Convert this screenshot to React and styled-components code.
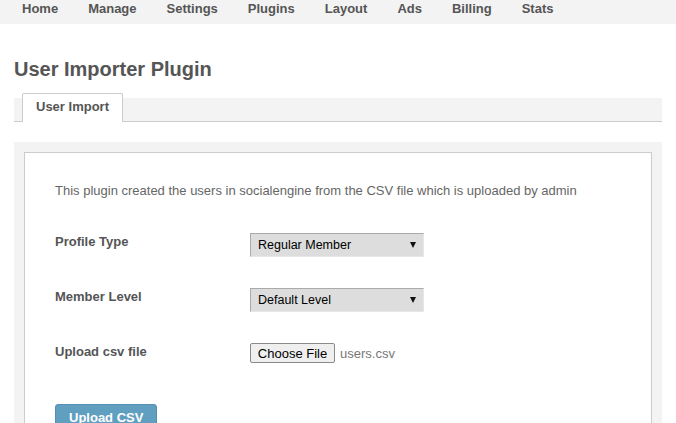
import React, { useState } from 'react';
import styled, { createGlobalStyle } from 'styled-components';

const GlobalStyle = createGlobalStyle`
  body {
    margin: 0;
    background: #fff;
    font-family: "Liberation Sans", Arial, sans-serif;
    font-size: 13px;
    color: #555;
  }
`;

const menu = ['Home', 'Manage', 'Settings', 'Plugins', 'Layout', 'Ads', 'Billing', 'Stats'];

const App = () => {
  const [profile, setProfile] = useState('regular');
  const [level, setLevel] = useState('default');

  return (
    <>
      <GlobalStyle />
      <Nav>
        {menu.map(item => (
          <NavItem key={item} href="#">{item}</NavItem>
        ))}
      </Nav>

      <Title>User Importer Plugin</Title>

      <TabBar>
        <Tab>User Import</Tab>
      </TabBar>

      <Panel>
        <FormBox>
          <Description>
            This plugin created the users in socialengine from the CSV file which is uploaded by admin
          </Description>

          <Row>
            <Label>Profile Type</Label>
            <SelectWrap>
              <Select value={profile} onChange={e => setProfile(e.target.value)}>
                <option value="regular">Regular Member</option>
              </Select>
              <Arrow />
            </SelectWrap>
          </Row>

          <Row>
            <Label>Member Level</Label>
            <SelectWrap>
              <Select value={level} onChange={e => setLevel(e.target.value)}>
                <option value="default">Default Level</option>
              </Select>
              <Arrow />
            </SelectWrap>
          </Row>

          <Row>
            <Label>Upload csv file</Label>
            <FileField>
              <ChooseButton type="button">Choose File</ChooseButton>
              <FileName>users.csv</FileName>
            </FileField>
          </Row>

          <SubmitButton type="button">Upload CSV</SubmitButton>
        </FormBox>
      </Panel>
    </>
  );
};

export default App;

const Nav = styled.nav`
  display: flex;
  height: 24px;
  box-sizing: border-box;
  padding: 1px 0 0 7px;
  background: #f3f3f3;
`;

const NavItem = styled.a`
  padding: 0 15px;
  line-height: 16px;
  font-size: 13px;
  font-weight: bold;
  color: #555;
  text-decoration: none;
`;

const Title = styled.h1`
  margin: 34px 14px 0;
  font-size: 20px;
  line-height: 23px;
  font-weight: bold;
  color: #555;
`;

const TabBar = styled.div`
  display: flex;
  align-items: flex-end;
  height: 23px;
  margin: 17px 14px 0;
  padding-left: 8px;
  background: #f3f3f3;
  border-bottom: 1px solid #ccc;
`;

const Tab = styled.div`
  box-sizing: border-box;
  height: 29px;
  margin-bottom: -1px;
  padding: 4px 13px 6px;
  line-height: 18px;
  font-weight: bold;
  color: #555;
  background: #fff;
  border: 1px solid #ccc;
  border-bottom: none;
  border-radius: 2px 2px 0 0;
`;

const Panel = styled.div`
  margin: 20px 14px 0;
  padding: 10px 10px 0;
  background: #f3f3f3;
`;

const FormBox = styled.div`
  padding: 29px 30px 60px;
  background: #fff;
  border: 1px solid #ccc;
`;

const Description = styled.p`
  margin: 0 0 33px;
  line-height: 18px;
  color: #666;
`;

const Row = styled.div`
  display: grid;
  grid-template-columns: 195px auto;
  align-items: start;
  margin-bottom: 31px;

  &:last-of-type {
    margin-bottom: 41px;
  }
`;

const Label = styled.div`
  line-height: 18px;
  font-weight: bold;
  color: #555;
`;

const SelectWrap = styled.div`
  position: relative;
  width: 174px;
`;

const Select = styled.select`
  appearance: none;
  display: block;
  width: 174px;
  height: 24px;
  margin: 0;
  padding: 0 20px 0 7px;
  font-family: "Liberation Sans", Arial, sans-serif;
  font-size: 12.5px;
  color: #000;
  background: #ddd;
  border: 1px solid;
  border-color: #aaa #e6e6e6 #e6e6e6 #aaa;
  border-radius: 0;
  outline: none;
`;

const Arrow = styled.span`
  position: absolute;
  right: 8px;
  top: 9px;
  width: 0;
  height: 0;
  border-left: 3px solid transparent;
  border-right: 3px solid transparent;
  border-top: 6px solid #111;
  pointer-events: none;
`;

const FileField = styled.div`
  display: flex;
  align-items: center;
  gap: 5px;
`;

const ChooseButton = styled.button`
  box-sizing: border-box;
  width: 85px;
  height: 20px;
  margin: 0;
  padding: 0;
  font-family: "Liberation Sans", Arial, sans-serif;
  font-size: 13px;
  color: #000;
  background: #efefef;
  border: 1px solid #8a8a8a;
  border-radius: 2px;
`;

const FileName = styled.span`
  font-size: 13px;
  color: #777;
`;

const SubmitButton = styled.button`
  display: block;
  padding: 4px 13px;
  line-height: 18px;
  font-family: "Liberation Sans", Arial, sans-serif;
  font-size: 13px;
  font-weight: bold;
  color: #fff;
  background: #619fc1;
  border: 1px solid #5590b2;
  border-radius: 3px;
`;
